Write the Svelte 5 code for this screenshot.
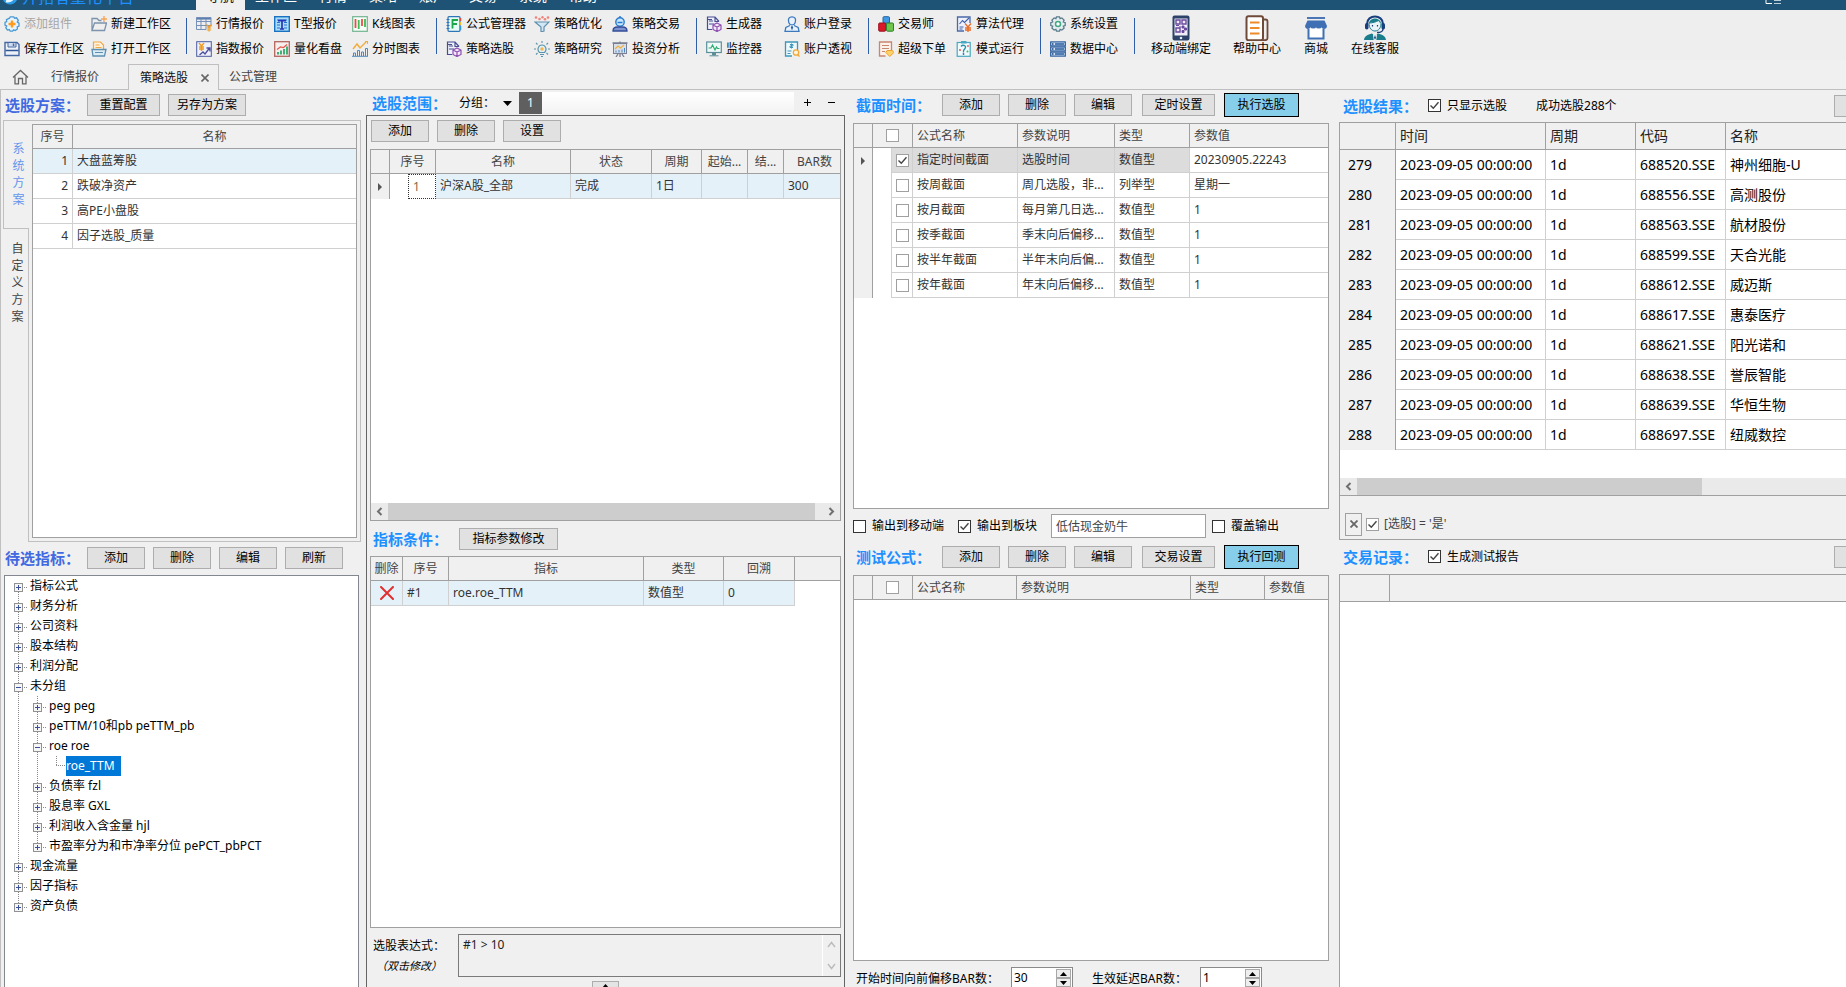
<script>
  const icons = {
    addWidget: '<path d="M5.500 2.200L6.300 .8h3.400l.8 1.400 2-.4 1.800 2.600-1 1.700 1.700 1.100v3l-1.800.8.200 1.900-2.200 1.600-1.700-.7-.9 1.400H6.200l-.8-1.500-2 .3-1.600-2.300.9-1.700L1 9.200V6.500l1.700-.9-.2-1.900z" fill="#e8f4fc" stroke="#4a9ad4" stroke-width="1.300"/><path d="M8 4.500v7M4.500 8h7" stroke="#ff9a1f" stroke-width="2.400"/>',
    save: '<path d="M1 1.500h12l2 2v11H1z" fill="#eef2f8" stroke="#4668a2" stroke-width="1.400"/><path d="M4 2v4h8V2" fill="#cfdcf0" stroke="#4668a2"/><path d="M9.500 2.500v2.500" stroke="#4668a2" stroke-width="1.500"/><path d="M1.500 9.500h13" stroke="#2d5597" stroke-width="1.500"/>',
    newSpace: '<path d="M1 14.500V2.500h5l2 2h2.500M1 14.500l2.500-7.500H15.500l-2 7.500z" fill="none" stroke="#7b93ad" stroke-width="1.300"/><path d="M13 0v6M10 3h6" stroke="#f6a55b" stroke-width="1.400"/>',
    openSpace: '<path d="M2.500 8V1h7l3 3v4" fill="#fff3df" stroke="#f0a742" stroke-width="1.200"/><path d="M4.500 4h4M4.500 6.500h6" stroke="#f0a742"/><path d="M1 8.500h12l2 0-1.500 6.500H2z" fill="#dcecf5" stroke="#5e8fb0" stroke-width="1.300"/><path d="M4 11.500h8" stroke="#5e8fb0"/>',
    quote: '<rect x=".5" y="1" width="14.500" height="2.600" fill="#5c7fb0"/><path d="M.5 1.500h14.500v9M.5 1.500v12h9.500M.5 5.500h14.500M.5 9.500h14.500M5 3v10.500M10 3v10.500" fill="none" stroke="#7790b8" stroke-width="1"/><path d="M10.500 8.500l2.500 3 2.500-3M13 11v4.500M10.800 12h4.400M10.800 14h4.400" fill="none" stroke="#eea22d" stroke-width="1.200"/>',
    indexQuote: '<rect x=".7" y=".7" width="14.600" height="14.600" fill="#eef0fb" stroke="#4b5a9e"/><path d="M3 2l2.500 3L8 2M5.500 5v5M3 6h5M3 8h5" fill="none" stroke="#f39a1d" stroke-width="1.400"/><path d="M3.500 14l3.500-3 2 2 4.500-6M10.500 7h3.500v3.500" fill="none" stroke="#4b4f9c" stroke-width="1.300"/>',
    tQuote: '<rect x=".7" y=".7" width="14.600" height="14.600" fill="#a9dcf8" stroke="#1a73c0" stroke-width="1.400"/><path d="M3 4h10M3 6.500h3M10 6.500h3M3 9h3M10 9h3M3 12h3M10 12h3" stroke="#2a6fd0" stroke-width="1.200"/><path d="M4 4.700h8M8 4v9M6 13h4" stroke="#2736b6" stroke-width="1.700"/>',
    quant: '<rect x=".7" y=".7" width="14.600" height="14.600" fill="#f5efed" stroke="#b4665c" stroke-width="1.300"/><path d="M4 13.500V11M7 13.500v-4M10 13.500V8M13 13.500V5.500" stroke="#2fa866" stroke-width="1.800"/><path d="M3 8.500L6.500 6l3 .5 3.500-3" fill="none" stroke="#e45850" stroke-width="1.200"/>',
    kline: '<rect x=".7" y=".7" width="14.600" height="14.600" fill="#f7fdf9" stroke="#71b48e" stroke-width="1.200"/><path d="M3.500 3v9M10 3v7" stroke="#f04a4a" stroke-width="1.800"/><path d="M6.700 4v9M13 3v8" stroke="#3dbb55" stroke-width="1.800"/>',
    timeChart: '<path d="M1 8l4-5 3 4 6-6" fill="none" stroke="#f2ab3c" stroke-width="1.400"/><path d="M13 .5h2.500V3" fill="none" stroke="#f2ab3c" stroke-width="1.200"/><path d="M1.500 15v-3h2v3M5.500 15V9.500h2V15M9.500 15v-4h2v4M13.500 15V7.500h2V15M0 15.300h16" fill="none" stroke="#4f86b9"/>',
    formula: '<rect x="2" y=".7" width="12" height="14.600" rx="1" fill="#e7fbf4" stroke="#2e75b8" stroke-width="1.300"/><path d="M14.500 2v3" stroke="#ea4a3a" stroke-width="1.500"/><path d="M14.500 6v3" stroke="#f2c230" stroke-width="1.500"/><path d="M14.500 10v4" stroke="#2e9be0" stroke-width="1.500"/><path d="M.5 3.500h3M.5 6.500h3M.5 9.500h3M.5 12.500h3" stroke="#2e75b8"/><path d="M6.500 12.500V4H12M6.500 8h4.500" fill="none" stroke="#1aa64b" stroke-width="1.800"/>',
    optimize: '<path d="M1 6h14l-5 5v4l-3 1v-5z" fill="#d3e6f3" stroke="#6090b0" stroke-width="1.200"/><g fill="#f0837a"><circle cx="2" cy="1.500" r="1.300"/><circle cx="5.500" cy="3" r="1.300"/><circle cx="8.500" cy="1.200" r="1.200"/><circle cx="11" cy="3.200" r="1.300"/><circle cx="14" cy="1.500" r="1.300"/></g>',
    trader: '<circle cx="8" cy="6" r="4.200" fill="#c7e8fa" stroke="#2c7bd0" stroke-width="1.400"/><path d="M5.500 6.500h5M8 0v2" stroke="#2c7bd0" stroke-width="1.500"/><path d="M1 15c0-3 2.500-4 4.500-4h5c2 0 4.500 1 4.500 4z" fill="#7f94cf" stroke="#354c98" stroke-width="1.300"/>',
    picker: '<path d="M13 5.500L9 1H1.500v12.500H6M9 1v4.500h4" fill="#eef0fa" stroke="#474d90" stroke-width="1.200"/><path d="M3 5h4M3 8h5M1 3.500h5" stroke="#474d90"/><path d="M11 7l4 2v4.500l-4 2-4-2V9zM7 9l4 2 4-2M11 11v4.500" fill="#f4e6fb" stroke="#8c4fb0" stroke-width="1.200"/>',
    research: '<path d="M5.500 11.500C2.500 8.500 4.500 4 8 4s5.500 4.500 2.500 7.500zM6 13.500h4M7 15.500h2" fill="#e2f1f5" stroke="#5b95ad" stroke-width="1.200"/><circle cx="8" cy="8" r="1.700" fill="#f6b34b"/><path d="M8 0v2M2 2l1.500 1.500M14 2l-1.500 1.500M0 8h2M14 8h2M2 13.500L3.500 12M14 13.500L12.500 12" stroke="#5b95ad" stroke-width="1.100"/>',
    invest: '<path d="M.5 2h15M8 .5V2M4 16l2-3M12 16l-2-3M8 13v3" stroke="#7a7f91" stroke-width="1.300"/><rect x="1.500" y="2.500" width="13" height="10" fill="#d9dfea" stroke="#7a7f91"/><path d="M3 8l3-3 2.500 2L12 4" fill="none" stroke="#f0b13c" stroke-width="1.200"/><path d="M4 11.500v-2M7 11.500V9M10 11.500v-3M12.500 11.500V7" stroke="#4b87bd"/>',
    monitor: '<rect x=".7" y="1" width="14.600" height="10.500" fill="#effaf8" stroke="#5c8e9a" stroke-width="1.200"/><path d="M2.500 7h2.500l1.500-3L9 9l1.500-3 1 1.500h2" fill="none" stroke="#2bae72" stroke-width="1.200"/><path d="M6.500 11.500h3v2.500h-3zM3.500 14.800h9" fill="#5c8e9a" stroke="#5c8e9a"/>',
    login: '<path d="M8 .8c3 0 3.800 2 3.500 4.200C11.200 7.500 9.800 9 8 9S4.800 7.500 4.500 5C4.200 2.800 5 .8 8 .8z" fill="#e9f2fb" stroke="#3b79bd" stroke-width="1.300"/><path d="M6 9.500L1.800 11.500 1 15.300h14l-.8-3.800L10 9.500" fill="#e9f2fb" stroke="#3b79bd" stroke-width="1.300"/><path d="M8 9.500l-1.200 1.700L8 14.500l1.200-3.300z" fill="#2a62a6"/>',
    inspect: '<path d="M13.500 9V1H1.500v14H8" fill="#eef9fc" stroke="#3f96b8" stroke-width="1.300"/><path d="M7.500 2.500v5M6 3.500h3v1.500H6v1.500h3M3.500 10h4M3.500 12.500h3" fill="none" stroke="#3f96b8"/><circle cx="12" cy="11.500" r="2.700" fill="#fff4de" stroke="#f2a93b" stroke-width="1.300"/><path d="M13.500 13.500l2 2" stroke="#f2a93b" stroke-width="1.500"/>',
    cubes: '<rect x="5" y=".7" width="6.500" height="6.500" rx="1" fill="#3f9ae3" stroke="#2564a0"/><rect x=".7" y="7" width="7" height="8.200" rx="1" fill="#d9182a" stroke="#9c1020"/><rect x="8.500" y="7" width="7" height="8.200" rx="1" fill="#6ec64c" stroke="#2f7f2c"/>',
    superOrder: '<path d="M13.500 9V1H1.500v14h6" fill="#fdf1ec" stroke="#c7866f" stroke-width="1.300"/><path d="M4 4.500h7M4 7.500h7M4 10.500h3" stroke="#c7866f"/><path d="M9 9.500h5.500l1.300 2-4 4-4-4z" fill="#ffd166" stroke="#eda22a"/>',
    algo: '<path d="M14 7V1H1.500v14H8" fill="#eef1fb" stroke="#4a69a8" stroke-width="1.300"/><path d="M3.500 8l3-3.500 2 2L13 2M3.500 11h4M3.500 13h3" fill="none" stroke="#3f5fa8" stroke-width="1.100"/><path d="M9 7.500l3 3.500 3-3.500M12 11v5M9 12h6M9 14h6" fill="none" stroke="#ec6a24" stroke-width="1.300"/>',
    mode: '<rect x="1.200" y="1.500" width="13" height="13.800" fill="#effbfd" stroke="#4aa7c0" stroke-width="1.200"/><rect x="5" y="0" width="5.500" height="2.500" fill="#4aa7c0"/><path d="M5 5.500c2-2.500 6-.5 4 2L7.500 9.500v2" fill="none" stroke="#2d8ea8" stroke-width="1.300"/><circle cx="4" cy="9" r="1" fill="#e4574f"/><circle cx="11.500" cy="10.500" r="1" fill="#44b072"/><circle cx="7.500" cy="13" r=".9" fill="#2d6ea8"/><circle cx="12" cy="5" r=".9" fill="#e4574f"/>',
    settings: '<path d="M6.500 .8h3l.6 1.900 1.800-.7 2.200 2.100-.8 1.800 1.900.7v2.900l-1.900.7.8 1.800-2.200 2.100-1.800-.8-.6 1.900h-3l-.6-1.900-1.800.8-2.200-2.100.8-1.800-1.900-.7V6.600l1.900-.7-.8-1.800L4.100 2l1.800.7z" fill="#e6eef0" stroke="#5b7c8c" stroke-width="1.300"/><circle cx="8" cy="8" r="2.500" fill="#fff" stroke="#43a883" stroke-width="1.500"/>',
    dataCenter: '<g fill="#cfe3f8" stroke="#2a5c9c" stroke-width="1.200"><rect x=".7" y=".9" width="14.600" height="4"/><rect x=".7" y="6" width="14.600" height="4"/><rect x=".7" y="11.100" width="14.600" height="4"/></g><path d="M5 3h9M5 8h9M5 13.100h9" stroke="#2a5c9c" stroke-width="1.500"/><path d="M2 3h1.500M2 8h1.500M2 13.100h1.500" stroke="#1b3f73" stroke-width="1.500"/>'
  };

  const big = {
    phone: '<rect x="4.500" y=".5" width="17" height="25" rx="2" fill="#2c4268"/><rect x="6.500" y="3.500" width="13" height="17" fill="#f0ecf8"/><path d="M8 5h4v4H8zM14 5h4v4h-4zM8 13h4v4H8z" fill="none" stroke="#6a4a9e" stroke-width="1.400"/><path d="M14 11h2v2h-2zM16.500 13h2v2h-2zM14 15.500h2v2h-2zM8 10.500h3M12 11v2" stroke="#6a4a9e" fill="#6a4a9e"/><circle cx="13" cy="23" r="1.300" fill="#e6ecf5"/>',
    help: '<rect x="2.500" y="1.200" width="16.500" height="24" rx="2" fill="#fff" stroke="#6f4a38" stroke-width="2"/><path d="M19 4.500h2.500c1 0 2 .8 2 2V23c0 1.500-1 2.200-2.500 2.200h-3" fill="none" stroke="#6f4a38" stroke-width="1.800"/><path d="M6 7.500h9.500M6 13h9.500M6 18.500h9.500" stroke="#ed8a2c" stroke-width="2"/>',
    shop: '<path d="M4 2h18v2H4z" fill="#4a76b8"/><path d="M4.500 5.500h17L24 11c0 2-1.500 3-3 3s-2.500-1-2.600-2c-.2 1-1.300 2-2.700 2S13.200 13 13 12c-.2 1-1.300 2-2.700 2s-2.500-1-2.700-2c-.2 1-1.300 2-2.600 2s-3-1-3-3z" fill="#3f70b4"/><path d="M5.500 13.500v10h15v-10" fill="#fff" stroke="#3f70b4" stroke-width="2"/><path d="M8.500 15.500h9v5.500h-9z" fill="#fff"/>',
    service: '<path d="M5 9c0-10 16-10 16 0" fill="none" stroke="#183f7d" stroke-width="2"/><path d="M7 8c1-6 11-6 12 0l-2.500-2c-3 2-6 1.500-9.500 2z" fill="#197d8c"/><path d="M7 8c3.500 0 7-1 9.500-2.500L19 8.500C19 13 16.500 16 13 16S7 13 7 8z" fill="#eaf4f8" stroke="#197d8c"/><rect x="3" y="8" width="3.500" height="6.500" rx="1.700" fill="#183f7d"/><rect x="19.500" y="8" width="3.500" height="6.500" rx="1.700" fill="#183f7d"/><path d="M21 14c0 2.500-2.500 3.500-6 3.500" fill="none" stroke="#183f7d" stroke-width="1.300"/><path d="M10.500 10v1.500M15.500 10v1.500" stroke="#183f7d" stroke-width="1.200"/><path d="M2 25c.5-4 3.500-5.500 8-6.500l3 2.500 3-2.500c4.500 1 7.500 2.500 8 6.500z" fill="#197d8c"/><path d="M11 19l2 2 2-2-.7 6h-2.600z" fill="#fff"/><path d="M13 20.500l-1 2 1 2.500 1-2.500z" fill="#183f7d"/>'
  };

  const groups = [
    { cols: 'c1', items: [['addWidget', '添加组件', true], ['newSpace', '新建工作区'], ['save', '保存工作区'], ['openSpace', '打开工作区']] },
    { cols: 'c2', items: [['quote', '行情报价'], ['tQuote', 'T型报价'], ['kline', 'K线图表'], ['indexQuote', '指数报价'], ['quant', '量化看盘'], ['timeChart', '分时图表']] },
    { cols: 'c3', items: [['formula', '公式管理器'], ['optimize', '策略优化'], ['trader', '策略交易'], ['picker', '策略选股'], ['research', '策略研究'], ['invest', '投资分析']] },
    { cols: 'c4', items: [['picker', '生成器'], ['login', '账户登录'], ['monitor', '监控器'], ['inspect', '账户透视']] },
    { cols: 'c4', items: [['cubes', '交易师'], ['algo', '算法代理'], ['superOrder', '超级下单'], ['mode', '模式运行']] },
    { cols: 'c5', items: [['settings', '系统设置'], ['dataCenter', '数据中心']] }
  ];
  const bigItems = [['phone', '移动端绑定'], ['help', '帮助中心'], ['shop', '商城'], ['service', '在线客服']];
  const menus = ['导航', '工作区', '行情', '策略', '账户', '交易', '系统', '帮助'];

  const plans = ['大盘蓝筹股', '跌破净资产', '高PE小盘股', '因子选股_质量'];
  const tree = [
    { t: '指标公式' }, { t: '财务分析' }, { t: '公司资料' }, { t: '股本结构' }, { t: '利润分配' },
    { t: '未分组', kids: [
      { t: 'peg peg' }, { t: 'peTTM/10和pb peTTM_pb' },
      { t: 'roe roe', kids: [{ t: 'roe_TTM', leaf: true }] },
      { t: '负债率 fzl' }, { t: '股息率 GXL' }, { t: '利润收入含金量 hjl' }, { t: '市盈率分为和市净率分位 pePCT_pbPCT' }
    ] },
    { t: '现金流量' }, { t: '因子指标' }, { t: '资产负债' }
  ];
  const sections = [
    ['指定时间截面', '选股时间', '数值型', '20230905.22243'],
    ['按周截面', '周几选股，非...', '列举型', '星期一'],
    ['按月截面', '每月第几日选...', '数值型', '1'],
    ['按季截面', '季末向后偏移...', '数值型', '1'],
    ['按半年截面', '半年末向后偏...', '数值型', '1'],
    ['按年截面', '年末向后偏移...', '数值型', '1']
  ];
  const results = [
    [279, '688520.SSE', '神州细胞-U'], [280, '688556.SSE', '高测股份'], [281, '688563.SSE', '航材股份'],
    [282, '688599.SSE', '天合光能'], [283, '688612.SSE', '威迈斯'], [284, '688617.SSE', '惠泰医疗'],
    [285, '688621.SSE', '阳光诺和'], [286, '688638.SSE', '誉辰智能'], [287, '688639.SSE', '华恒生物'],
    [288, '688697.SSE', '纽威数控']
  ];
</script>

{#snippet branch(nodes)}
  <ul>
    {#each nodes as n}
      <li>
        <div class="node">
          {#if n.leaf}
            <i class="elbow"></i><span class="picked">{n.t}</span>
          {:else}
            <button class="toggle" aria-label={n.kids ? '收起' : '展开'}>
              <svg width="9" height="9" viewBox="0 0 9 9"><path d={n.kids ? 'M2 4.500h5' : 'M2 4.500h5M4.500 2v5'} stroke="#3a4f9a" /></svg>
            </button>
            <i class="dash"></i><span>{n.t}</span>
          {/if}
        </div>
        {#if n.kids}{@render branch(n.kids)}{/if}
      </li>
    {/each}
  </ul>
{/snippet}

{#snippet arrow(d)}
  <svg width="9" height="9" viewBox="0 0 9 9"><path {d} fill="none" stroke="#707070" stroke-width="2" /></svg>
{/snippet}

{#snippet spinner(id, value)}
  <div class="spin">
    <input {id} type="text" {value} />
    <div class="steps">
      <button aria-label="增加"><svg width="7" height="4" viewBox="0 0 7 4"><path d="M0 4L3.500 0 7 4z" /></svg></button>
      <button aria-label="减少"><svg width="7" height="4" viewBox="0 0 7 4"><path d="M0 0L3.500 4 7 0z" /></svg></button>
    </div>
  </div>
{/snippet}

<div class="app">
  <header class="title">
    <svg class="logo" width="16" height="16" viewBox="0 0 16 16"><circle cx="8" cy="8" r="7.500" fill="#2b9be6" /><path d="M4 12c5 1 8-2 7-7" fill="none" stroke="#e8f6ff" stroke-width="2.500" /></svg>
    <span class="brand">开拓者量化平台</span>
    <nav>
      {#each menus as m, i}<a href="#menu" class:on={i === 0}>{m}</a>{/each}
    </nav>
    <svg class="tools" width="17" height="5" viewBox="0 0 17 5"><path d="M1 0v3.500h6" fill="none" stroke="#fff" /><path d="M9 .5h7M9 3.500h7" stroke="#b9cfdd" /></svg>
  </header>

  <div class="toolbar">
    {#each groups as g}
      <div class="group {g.cols}">
        {#each g.items as [icon, label, off]}
          <button class="tool" disabled={off}>
            <svg width="16" height="16" viewBox="0 0 16 16">{@html icons[icon]}</svg>{label}
          </button>
        {/each}
      </div>
      <i class="sep"></i>
    {/each}
    <div class="bigs">
      {#each bigItems as [icon, label]}
        <button class="bigtool"><svg width="26" height="26" viewBox="0 0 26 26">{@html big[icon]}</svg>{label}</button>
      {/each}
    </div>
  </div>

  <div class="tabs">
    <button class="home" aria-label="首页">
      <svg width="17" height="16" viewBox="0 0 17 16"><path d="M1 8.500L8.500 1.500 16 8.500M3 7.500v7.300h3.500V9.500h4v5.300H14V7.500" fill="none" stroke="#666" stroke-width="1.300" /></svg>
    </button>
    <button class="tab">行情报价</button>
    <div class="tab on">策略选股
      <button aria-label="关闭"><svg width="8" height="8" viewBox="0 0 8 8"><path d="M.5 .5l7 7M7.500 .5l-7 7" stroke="#666" stroke-width="1.600" /></svg></button>
    </div>
    <button class="tab">公式管理</button>
  </div>

  <main>
    <section class="left">
      <div class="bar b30">
        <h2>选股方案：</h2>
        <button class="btn wide">重置配置</button>
        <button class="btn wider">另存为方案</button>
      </div>
      <div class="tabbox">
        <div class="vtabs">
          <button class="v on"><span>系统方案</span></button>
          <button class="v"><span>自定义方案</span></button>
        </div>
        <div class="tabbody">
          <div class="grid">
            <table>
              <colgroup><col style="width:40px" /><col /></colgroup>
              <thead><tr><th class="mid">序号</th><th class="mid">名称</th></tr></thead>
              <tbody>
                {#each plans as p, i}
                  <tr class:hot={i === 0}><td class="num">{i + 1}</td><td>{p}</td></tr>
                {/each}
              </tbody>
            </table>
          </div>
        </div>
      </div>
      <div class="bar b33">
        <h2>待选指标：</h2>
        <button class="btn">添加</button><button class="btn">删除</button><button class="btn">编辑</button><button class="btn">刷新</button>
      </div>
      <div class="tree">{@render branch(tree)}</div>
    </section>

    <section class="scope">
      <div class="scopehead">
        <h2>选股范围：</h2>
        <span class="grp">分组：</span>
        <button class="drop" aria-label="选择分组"><svg width="9" height="5" viewBox="0 0 9 5"><path d="M0 0h9L4.500 5z" /></svg></button>
        <button class="one">1</button>
        <i class="fill"></i>
        <button class="pm" aria-label="添加分组"><svg width="7" height="7" viewBox="0 0 7 7"><path d="M0 3.500h7M3.500 0v7" stroke="#000" /></svg></button>
        <button class="pm last" aria-label="删除分组"><svg width="7" height="7" viewBox="0 0 7 7"><path d="M0 3.500h7" stroke="#000" /></svg></button>
      </div>
      <div class="frame">
        <div class="bar b33">
          <button class="btn">添加</button><button class="btn">删除</button><button class="btn">设置</button>
        </div>
        <div class="grid g1">
          <table class="over">
            <colgroup>
              <col style="width:19px" /><col style="width:18px" /><col style="width:28px" /><col /><col style="width:81px" /><col style="width:50px" /><col style="width:46px" /><col style="width:36px" /><col style="width:61px" />
            </colgroup>
            <thead>
              <tr><th></th><th class="mid" colspan="2">序号</th><th class="mid">名称</th><th class="mid">状态</th><th class="mid">周期</th><th class="mid">起始...</th><th class="mid">结...</th><th class="mid">BAR数</th></tr>
            </thead>
            <tbody>
              <tr class="hot">
                <td class="gut"><svg width="4" height="8" viewBox="0 0 4 8"><path d="M0 0l4 4-4 4z" fill="#555" /></svg></td>
                <td class="blank"></td><td class="focus">1</td><td>沪深A股_全部</td><td>完成</td><td>1日</td><td></td><td></td><td>300</td>
              </tr>
            </tbody>
          </table>
          <div class="hscroll">
            <button aria-label="向左">{@render arrow('M6.500 1L3 4.500 6.500 8')}</button>
            <i class="thumb long"></i>
            <button class="end" aria-label="向右">{@render arrow('M2.500 1L6 4.500 2.500 8')}</button>
          </div>
        </div>
        <div class="bar b35">
          <h2>指标条件：</h2><button class="btn widest">指标参数修改</button>
        </div>
        <div class="grid g1">
          <table>
            <colgroup><col style="width:32px" /><col style="width:46px" /><col /><col style="width:80px" /><col style="width:71px" /><col style="width:45px" /></colgroup>
            <thead><tr><th class="mid tight">删除</th><th class="mid">序号</th><th class="mid">指标</th><th class="mid">类型</th><th class="mid">回溯</th><th></th></tr></thead>
            <tbody>
              <tr class="hot">
                <td class="mid tight"><button class="plain" aria-label="删除"><svg width="14" height="14" viewBox="0 0 14 14"><path d="M1 1l12 12M13 1L1 13" stroke="#e03030" stroke-width="2" stroke-linecap="round" /></svg></button></td>
                <td>#1</td><td>roe.roe_TTM</td><td>数值型</td><td>0</td><td class="void"></td>
              </tr>
            </tbody>
          </table>
        </div>
        <div class="expr">
          <label for="expr"><span>选股表达式：</span><em>（双击修改）</em></label>
          <div class="exprbox">
            <textarea id="expr" readonly>#1 &gt; 10</textarea>
            <div class="vs">
              <svg width="9" height="7" viewBox="0 0 9 7"><path d="M1 6l3.500-4.500L8 6" fill="none" stroke="#bbb" stroke-width="1.400" /></svg>
              <svg width="9" height="7" viewBox="0 0 9 7"><path d="M1 1l3.500 4.500L8 1" fill="none" stroke="#bbb" stroke-width="1.400" /></svg>
            </div>
          </div>
        </div>
        <button class="grip" aria-label="展开面板"><svg width="7" height="4" viewBox="0 0 7 4"><path d="M0 4L3.500 0 7 4z" /></svg></button>
      </div>
    </section>

    <section class="cross">
      <div class="bar b33 top">
        <h2>截面时间：</h2>
        <button class="btn">添加</button><button class="btn">删除</button><button class="btn">编辑</button>
        <button class="btn wide sched">定时设置</button><button class="btn go">执行选股</button>
      </div>
      <div class="grid g1">
        <table>
          <colgroup><col style="width:19px" /><col style="width:19px" /><col style="width:21px" /><col style="width:105px" /><col style="width:97px" /><col style="width:75px" /><col /></colgroup>
          <thead><tr><th></th><th colspan="2" class="mid"><input type="checkbox" class="soft" aria-label="全选" /></th><th>公式名称</th><th>参数说明</th><th>类型</th><th>参数值</th></tr></thead>
          <tbody>
            {#each sections as r, i}
              <tr class:sel={i === 0}>
                <td class="gut">{#if i === 0}<svg width="4" height="8" viewBox="0 0 4 8"><path d="M0 0l4 4-4 4z" fill="#555" /></svg>{/if}</td>
                <td class="blank"></td>
                <td class="mid tight"><input type="checkbox" class="soft" checked={i === 0} aria-label={r[0]} /></td>
                <td>{r[0]}</td><td>{r[1]}</td><td>{r[2]}</td><td>{r[3]}</td>
              </tr>
            {/each}
          </tbody>
        </table>
      </div>
      <div class="output">
        <label class="o1"><input type="checkbox" />输出到移动端</label>
        <label><input type="checkbox" checked />输出到板块</label>
        <input class="field" type="text" value="低估现金奶牛" aria-label="板块名称" />
        <label><input type="checkbox" />覆盖输出</label>
      </div>
      <div class="bar b33 low">
        <h2>测试公式：</h2>
        <button class="btn">添加</button><button class="btn">删除</button><button class="btn">编辑</button>
        <button class="btn wide sched">交易设置</button><button class="btn go">执行回测</button>
      </div>
      <div class="grid g1">
        <table>
          <colgroup><col style="width:19px" /><col style="width:40px" /><col style="width:104px" /><col /><col style="width:74px" /><col style="width:63px" /></colgroup>
          <thead><tr><th></th><th class="mid"><input type="checkbox" class="soft" aria-label="全选" /></th><th>公式名称</th><th>参数说明</th><th>类型</th><th>参数值</th></tr></thead>
        </table>
      </div>
      <div class="offsets">
        <label for="shift">开始时间向前偏移BAR数：</label>{@render spinner('shift', '30')}
        <label for="delay" class="second">生效延迟BAR数：</label>{@render spinner('delay', '1')}
      </div>
    </section>

    <section class="result">
      <div class="bar b32">
        <h2>选股结果：</h2>
        <label><input type="checkbox" checked />只显示选股</label>
        <span class="count">成功选股288个</span>
        <button class="btn edge">导出</button>
      </div>
      <div class="grid big r1">
        <table>
          <colgroup><col style="width:56px" /><col style="width:150px" /><col style="width:90px" /><col style="width:90px" /><col /></colgroup>
          <thead><tr><th></th><th>时间</th><th>周期</th><th>代码</th><th>名称</th></tr></thead>
          <tbody>
            {#each results as [n, code, name]}
              <tr><td class="gut">{n}</td><td>2023-09-05 00:00:00</td><td>1d</td><td>{code}</td><td>{name}</td></tr>
            {/each}
          </tbody>
        </table>
        <div class="hscroll">
          <button aria-label="向左">{@render arrow('M6.500 1L3 4.500 6.500 8')}</button>
          <i class="thumb short"></i>
        </div>
        <div class="filter">
          <button aria-label="清除筛选"><svg width="8" height="8" viewBox="0 0 8 8"><path d="M.5 .5l7 7M7.500 .5l-7 7" stroke="#666" stroke-width="1.800" /></svg></button>
          <label><input type="checkbox" class="soft" checked />[选股] = '是'</label>
        </div>
      </div>
      <div class="bar b34">
        <h2>交易记录：</h2>
        <label><input type="checkbox" checked />生成测试报告</label>
        <button class="btn edge">导出</button>
      </div>
      <div class="grid big r2">
        <table>
          <colgroup><col style="width:50px" /><col /></colgroup>
          <thead><tr><th></th><th></th></tr></thead>
        </table>
      </div>
    </section>
  </main>
</div>

<style>
  :global(body) { margin: 0; background: #f0f0f0; overflow: hidden; }
  .app {
    height: 100vh; display: flex; flex-direction: column; overflow: hidden; background: #f0f0f0; color: #000;
    font: 12px/16px "Noto Sans", "Noto Sans CJK SC", sans-serif;
  }
  .app * { box-sizing: border-box; }
  button, input, textarea { font: inherit; color: inherit; margin: 0; padding: 0; border: 0; background: none; border-radius: 0; }
  svg { display: block; flex: none; }
  i { display: block; flex: none; }
  h2 { margin: 0; font-size: 15px; line-height: 20px; font-weight: 700; color: #1e90ff; white-space: nowrap; flex: none; width: 82px; }
  .left h2 { color: #4169e1; }

  .title { height: 10px; flex: none; overflow: hidden; background: #1f5375; display: flex; align-items: flex-end; }
  .logo { margin: 0 4px 5px 2px; }
  .brand { font-size: 16px; line-height: 20px; color: #1e90ff; width: 174px; padding-bottom: 3px; white-space: nowrap; flex: none; }
  nav { display: flex; align-items: flex-end; flex: 1; height: 100%; }
  nav a { color: #fff; text-decoration: none; font-size: 14px; line-height: 20px; padding: 0 11px 4px; white-space: nowrap; }
  nav a.on { background: #f0f0f0; color: #222; width: 49px; padding: 0 10px 4px; }
  nav a:nth-child(2) { padding-left: 10px; }
  .tools { margin: 0 64px 5px 0; }

  .toolbar { height: 50px; flex: none; display: flex; align-items: flex-start; background: #eee; }
  .group { display: grid; grid-auto-rows: 25px; padding: 1px 0 0 9px; flex: none; }
  .c1 { grid-template-columns: 87px 95px; padding-left: 4px; }
  .c2 { grid-template-columns: 78px 78px 84px; }
  .c3 { grid-template-columns: 88px 78px 84px; }
  .c4 { grid-template-columns: 78px 84px; }
  .c5 { grid-template-columns: 84px; }
  .tool { display: flex; align-items: center; gap: 4px; white-space: nowrap; }
  .tool:disabled { color: #a6a6a6; }
  .sep { width: 1px; height: 36px; margin-top: 8px; background: #2f5fa8; }
  .bigs { display: flex; gap: 22px; padding: 5px 0 0 16px; }
  .bigtool { display: flex; flex-direction: column; align-items: center; white-space: nowrap; }

  .tabs { height: 30px; flex: none; display: flex; align-items: flex-end; border-bottom: 1px solid #bfbfbf; color: #444; }
  .home { width: 39px; height: 25px; padding-left: 12px; }
  .tab { height: 25px; padding: 0 11px 0 12px; white-space: nowrap; }
  .tab:nth-child(2) { width: 89px; text-align: left; }
  .tab.on { width: 91px; height: 26px; margin-bottom: -1px; padding: 0 0 0 11px; border: 1px solid #bfbfbf; border-bottom: 0; background: #f0f0f0; color: #111; display: flex; align-items: center; gap: 13px; }
  .tab:last-child { padding: 0 10px; }

  main { flex: 1; min-height: 0; display: grid; grid-template-columns: minmax(0, 366fr) minmax(0, 479fr) minmax(0, 492fr) minmax(0, 509fr); }
  section { min-width: 0; min-height: 0; display: flex; flex-direction: column; }

  .bar { display: flex; align-items: center; gap: 8px; flex: none; }
  .bar h2 { margin-right: -8px; }
  .b30 { height: 30px; }
  .b32 { height: 32px; }
  .b33 { height: 33px; }
  .b34 { height: 34px; }
  .b35 { height: 35px; }
  .btn { width: 58px; height: 22px; flex: none; border: 1px solid #adadad; background: #e1e1e1; white-space: nowrap; overflow: hidden; }
  .wide { width: 73px; }
  .wider { width: 78px; }
  .widest { width: 99px; }
  .go { width: 75px; height: 24px; border-color: #000; background: #87ceeb; }

  .left { border-left: 1px solid #c0c0c0; padding-right: 5px; }
  .left .bar { padding-left: 4px; }
  .left .b33 { padding-bottom: 1px; }
  .tabbox { flex: 422 1 0; min-height: 0; display: flex; margin-left: 2px; }
  .vtabs { width: 26px; flex: none; display: flex; flex-direction: column; }
  .v { display: flex; align-items: flex-start; justify-content: center; padding: 11px 0 0 4px; border-right: 1px solid #c0c0c0; flex: 1; color: #444; }
  .v span { width: 12px; line-height: 17px; word-break: break-all; white-space: normal; }
  .v.on { flex: 0 0 109px; padding-top: 19px; color: #6495ed; border: 1px solid #c0c0c0; border-right: 0; }
  .tabbody { flex: 1; min-width: 0; display: flex; border: 1px solid #c0c0c0; border-left: 0; padding: 3px; }
  .tabbody .grid { flex: 1; }
  .tree { flex: 412 1 0; min-height: 0; overflow: hidden; margin: 0 2px 0 3px; background: #fff; border: 1px solid #828790; border-bottom: 0; }

  .tree :global(ul) { list-style: none; margin: 0; padding: 0; background: repeating-linear-gradient(#888 0 1px, #fff 1px 2px) 13px 10px / 1px calc(100% - 20px) no-repeat; }
  .tree :global(ul ul) { margin-left: 19px; background-position: 13px 0; background-size: 1px calc(100% - 10px); }
  .node { display: flex; align-items: center; height: 20px; padding-left: 9px; white-space: nowrap; }
  .node .toggle { width: 9px; height: 9px; margin-top: 3px; background: #f6f6f6; box-shadow: inset 0 0 0 1px #919191; flex: none; }
  .dash { width: 4px; height: 1px; margin: 3px 3px 0 0; background: repeating-linear-gradient(90deg, #fff 0 1px, #888 1px 2px); }
  .elbow { width: 10px; height: 1px; margin-left: 4px; background: repeating-linear-gradient(90deg, #888 0 1px, #fff 1px 2px); }
  .picked { background: #0078d7; color: #fff; line-height: 20px; padding-right: 6px; }

  .grid { background: #fff; border: 1px solid #a0a0a0; min-height: 0; min-width: 0; overflow: hidden; display: flex; flex-direction: column; }
  .g1 { flex: 1 1 0; }
  table { table-layout: fixed; width: 100%; border-collapse: separate; border-spacing: 0; flex: none; color: #333; }
  .over { width: calc(100% + 5px); }
  th, td { padding: 0 4px; text-align: left; font-weight: 400; white-space: nowrap; overflow: hidden; line-height: 20px; }
  th { height: 24px; background: #f0f0f0; border-right: 1px solid #a0a0a0; border-bottom: 1px solid #a0a0a0; color: #444; }
  td { height: 25px; border-right: 1px solid #d0d0d0; border-bottom: 1px solid #d0d0d0; }
  th:last-child, td:last-child { border-right: 0; }
  .mid { text-align: center; }
  .tight { padding: 0; }
  .num { text-align: right; }
  .hot td { background: #e5f1f9; }
  .gut, .hot .gut { background: #f0f0f0; border-right-color: #a0a0a0; border-bottom: 0; padding: 0; }
  .gut svg { margin: 0 auto; }
  .blank, .hot .blank { background: #fff; border-bottom: 0; }
  .hot .focus { background: #fff; border: 1px dotted #333; color: #8a6a48; }
  .hot .blank { border-right: 0; }
  .hot .void { background: #fff; border-bottom: 0; }
  .sel td:not(.gut, .blank, :last-child) { background: #dcdcdc; }
  td .plain { display: block; margin: 0 auto; width: 14px; }

  input[type='checkbox'] { appearance: none; width: 13px; height: 13px; flex: none; border: 1px solid #333; background: #fff; display: block; }
  input[type='checkbox'].soft { border-color: #a0a0a0; }
  input[type='checkbox']:checked { background: #fff url("data:image/svg+xml,%3Csvg xmlns='http://www.w3.org/2000/svg' viewBox='0 0 11 11'%3E%3Cpath d='M1.500 5.500l2.800 2.800 5.200-6' fill='none' stroke='%23444' stroke-width='1.400'/%3E%3C/svg%3E"); }
  th input[type='checkbox'], td input[type='checkbox'] { margin: 0 auto; }
  label { display: flex; align-items: center; gap: 6px; white-space: nowrap; }

  .hscroll { height: 17px; flex: none; display: flex; background: #eaeaea; margin-top: auto; }
  .hscroll button { width: 17px; flex: none; display: flex; align-items: center; justify-content: center; }
  .hscroll .end { margin-left: auto; }
  .thumb { background: #cdcdcd; }
  .long { flex: 0 0 91%; }
  .short { flex: 0 0 345px; }

  .scopehead { height: 25px; flex: none; display: flex; align-items: center; padding-left: 6px; }
  .scopehead h2 { width: 87px; }
  .grp { width: 44px; white-space: nowrap; }
  .drop { width: 16px; height: 20px; flex: none; padding-top: 2px; }
  .one { width: 23px; height: 22px; flex: none; background: #5f5f5f; color: #fff; }
  .fill { flex: 1; height: 22px; background: linear-gradient(#fff, #f3f3f3); margin-right: 9px; }
  .pm { width: 24px; height: 20px; flex: none; display: flex; align-items: center; padding-left: 1px; }
  .last { width: 18px; }
  .frame { flex: 1; min-height: 0; display: flex; flex-direction: column; border: 1px solid #646464; border-bottom: 0; padding: 0 3px; }
  .frame .bar.b33 { padding: 0 0 4px 1px; }
  .b35 { padding-left: 3px; }
  .b35 h2 { width: 86px; }
  .frame .bar.b35 h2 { margin-right: -8px; }
  .expr { height: 49px; flex: none; display: flex; padding-top: 6px; }
  .expr label { width: 88px; padding: 4px 0 0 3px; display: flex; flex-direction: column; align-items: flex-start; gap: 4px; }
  .expr em { padding-left: 3px; font-size: 11px; }
  .exprbox { flex: 1; display: flex; border: 1px solid #7a7a7a; background: #f0f0f0; }
  textarea { flex: 1; min-width: 0; resize: none; padding: 2px 4px; outline: 0; overflow: hidden; color: #222; }
  .vs { width: 18px; border-left: 1px solid #fff; display: flex; flex-direction: column; align-items: center; justify-content: space-between; padding: 6px 0; }
  .grip { width: 27px; height: 10px; flex: none; align-self: center; margin: 4px 0 -4px; border: 1px solid #adadad; background: #e4e4e4; display: flex; justify-content: center; padding-top: 2px; }

  .cross { padding: 0 8px; }
  .cross .bar { padding-left: 3px; }
  .cross .bar h2 { width: 86px; margin-right: -8px; }
  .top { padding-bottom: 3px; }
  .low { padding-bottom: 3px; }
  .sched { margin-left: 2px; }
  .go { margin-left: 1px; }
  .output { height: 33px; flex: none; display: flex; align-items: center; gap: 6px; padding-top: 1px; }
  .o1 { width: 99px; }
  .field { width: 155px; height: 24px; margin-left: 8px; padding: 0 4px; border: 1px solid #a0a0a0; background: #fff; color: #444; }
  .offsets { height: 26px; flex: none; display: flex; align-items: flex-start; padding: 6px 0 0 3px; }
  .offsets label { width: 155px; line-height: 24px; }
  .offsets .second { width: 108px; margin-left: 19px; }
  .spin { width: 62px; height: 22px; display: flex; border: 1px solid #8a8a8a; background: #fff; padding: 1px; flex: none; }
  .spin input { flex: 1; min-width: 0; padding-left: 1px; }
  .steps { width: 15px; display: flex; flex-direction: column; }
  .steps button { flex: 1; display: flex; align-items: center; justify-content: center; border: 1px solid #a8a8a8; background: #eee; }

  .result { padding-left: 2px; overflow: hidden; }
  .result .bar { padding-left: 4px; }
  .result .bar h2 { width: 85px; margin-right: -8px; }
  .b32 label, .b34 label { padding-bottom: 1px; }
  .count { padding-left: 21px; white-space: nowrap; }
  .edge { margin-left: auto; margin-right: -46px; }
  .big { margin-right: -1px; }
  .r1 { flex: 418 1 0; }
  .r2 { flex: 413 1 0; border-bottom: 0; }
  .big table { font-size: 14px; color: #000; }
  .big th { height: 27px; color: #222; }
  .big td { height: 30px; }
  .big .gut { padding-left: 8px; }
  .filter { height: 44px; flex: none; border-top: 1px solid #a0a0a0; background: #f0f0f0; display: flex; align-items: center; gap: 4px; padding: 13px 5px 0; color: #444; }
  .filter button { width: 17px; height: 23px; border: 1px solid #a0a0a0; display: flex; align-items: center; justify-content: center; }
  .filter label { gap: 5px; }
</style>
